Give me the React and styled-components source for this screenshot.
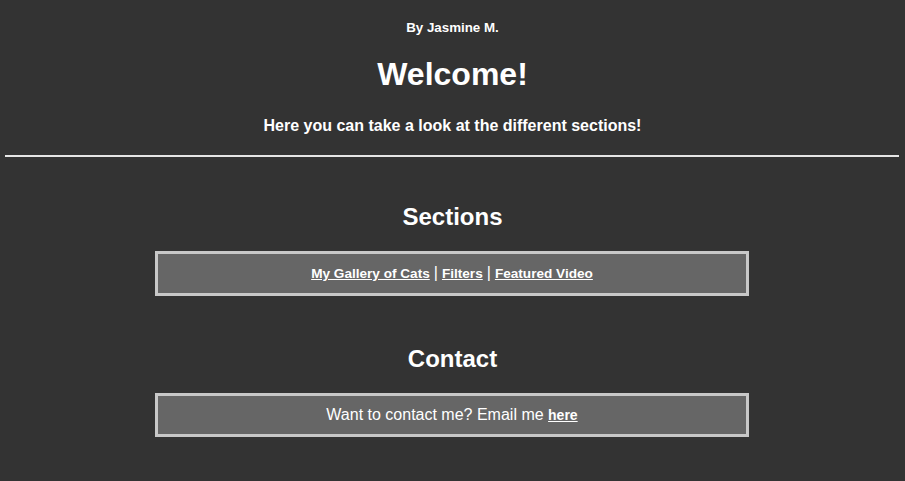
import React from "react";
import styled, { createGlobalStyle } from "styled-components";

const Global = createGlobalStyle`
  html, body { margin: 0; padding: 0; background: #333333; }
  body { font-family: "Liberation Sans", Arial, sans-serif; color: #ffffff; }
`;

const Page = styled.div`
  display: flex;
  flex-direction: column;
  align-items: center;
  text-align: center;
  padding-top: 20px;
  padding-bottom: 44px;
`;

const Byline = styled.h5`
  margin: 0;
  font-size: 13.33px;
  line-height: 15px;
  font-weight: bold;
`;

const Title = styled.h1`
  margin: 21px 0 0;
  font-size: 32px;
  line-height: 37px;
  font-weight: bold;
`;

const Subtitle = styled.h4`
  margin: 23px 0 0;
  font-size: 16px;
  line-height: 19px;
  font-weight: bold;
`;

const Rule = styled.hr`
  align-self: stretch;
  margin: 20px 6px 0 5px;
  border: none;
  height: 2px;
  background: #e6e6e6;
`;

const Section = styled.section`
  display: flex;
  flex-direction: column;
  align-items: center;
  margin-top: ${(p) => p.$top}px;
`;

const Heading = styled.h2`
  margin: 0;
  font-size: 24px;
  line-height: 28px;
  font-weight: bold;
`;

const Box = styled.div`
  margin-top: 20px;
  margin-right: 1px;
  width: 588px;
  padding: 10px 0;
  border: 3px solid #c8c8c8;
  background: #666666;
  font-size: 16px;
  line-height: 18px;
`;

const NavLink = styled.a`
  color: #ffffff;
  font-weight: bold;
  font-size: ${(p) => p.$size || 13.6}px;
  text-decoration: underline;
`;

const Sep = styled.span`
  margin: 0 4px;
`;

export default function App() {
  return (
    <>
      <Global />
      <Page>
        <Byline>By Jasmine M.</Byline>
        <Title>Welcome!</Title>
        <Subtitle>Here you can take a look at the different sections!</Subtitle>
        <Rule />
        <Section $top={46}>
          <Heading>Sections</Heading>
          <Box>
            <NavLink href="#gallery">My Gallery of Cats</NavLink>
            <Sep>|</Sep>
            <NavLink href="#filters">Filters</NavLink>
            <Sep>|</Sep>
            <NavLink href="#video">Featured Video</NavLink>
          </Box>
        </Section>
        <Section $top={49}>
          <Heading>Contact</Heading>
          <Box>
            Want to contact me? Email me <NavLink href="#mail" $size={14}>here</NavLink>
          </Box>
        </Section>
      </Page>
    </>
  );
}
